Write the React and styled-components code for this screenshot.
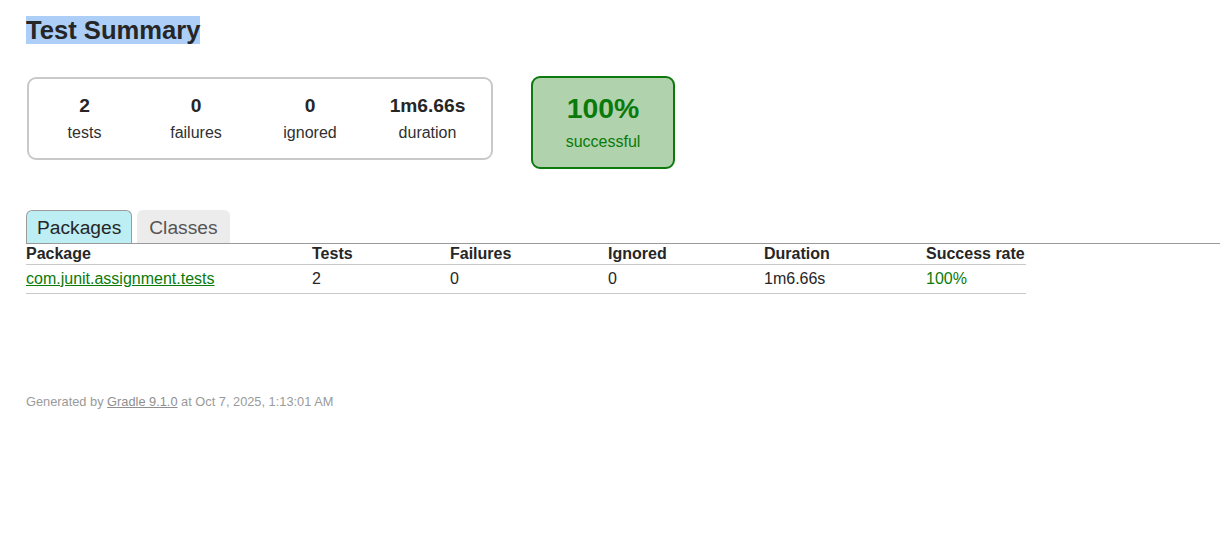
import React from 'react';
import styled, { createGlobalStyle } from 'styled-components';

const GlobalStyle = createGlobalStyle`
    body {
        margin: 0;
        padding: 0;
        background: #ffffff;
        font-family: "Liberation Sans", Arial, Helvetica, sans-serif;
        font-size: 16px;
        color: #262626;
    }
`;

const Content = styled.div`
    padding: 16px 0 0 26px;
`;

const Title = styled.h1`
    margin: 0;
    font-size: 25.6px;
    font-weight: bold;
    line-height: normal;
    color: #262626;
    white-space: nowrap;
    > span {
        background-color: #accef7;
    }
`;

const SummaryRow = styled.div`
    display: flex;
    align-items: flex-start;
    gap: 38px;
    margin-top: 31px;
`;

const SummaryBox = styled.div`
    display: flex;
    box-sizing: border-box;
    width: 466px;
    height: 83px;
    margin: 1px 0 0 1px;
    padding: 16px 0 0 0;
    border: 2px solid #c9c9c9;
    border-radius: 9px;
`;

const Counter = styled.div`
    width: ${(props) => props.w}px;
    text-align: center;
`;

const CounterValue = styled.div`
    font-size: 19.2px;
    font-weight: bold;
    line-height: 22px;
    color: #262626;
`;

const CounterLabel = styled.div`
    margin-top: 7px;
    font-size: 16px;
    line-height: 18px;
    color: #303030;
`;

const SuccessBox = styled.div`
    box-sizing: border-box;
    width: 144px;
    height: 93px;
    padding-top: 14px;
    border: 2px solid #0d7a0d;
    border-radius: 9px;
    background-color: #b0d3ae;
    color: #0a7a0a;
    text-align: center;
`;

const SuccessValue = styled.div`
    font-size: 28.4px;
    font-weight: bold;
    line-height: 32px;
`;

const SuccessLabel = styled.div`
    margin-top: 9px;
    font-size: 16px;
    line-height: 18px;
`;

const TabBar = styled.div`
    display: flex;
    gap: 5px;
    margin-top: 41px;
    border-bottom: 1px solid #9a9a9a;
`;

const Tab = styled.div`
    padding: 6px ${(props) => (props.selected ? 10 : 11)}px 4px;
    border: 1px solid ${(props) => (props.selected ? '#9c9c9c' : '#ececec')};
    border-bottom: none;
    border-radius: 6px 6px 0 0;
    background-color: ${(props) => (props.selected ? '#bdeef3' : '#ececec')};
    color: ${(props) => (props.selected ? '#262626' : '#555555')};
    font-size: 19.2px;
    line-height: 22px;
`;

const Table = styled.div`
    width: 1000px;
`;

const Row = styled.div`
    display: grid;
    grid-template-columns: 286px 138px 158px 156px 162px 100px;
    border-bottom: 1px solid #c8c8c8;
    padding: ${(props) => (props.head ? '1px 0 1px' : '5px 0 5px')};
    line-height: 18px;
    font-weight: ${(props) => (props.head ? 'bold' : 'normal')};
    white-space: nowrap;
`;

const Cell = styled.div`
    color: ${(props) => (props.green ? '#0a7a0a' : '#262626')};
`;

const PackageLink = styled.a`
    color: #0a7a0a;
    text-decoration: underline;
`;

const Footer = styled.div`
    margin-top: 100px;
    font-size: 12.8px;
    line-height: 15px;
    color: #9a9a9a;
    white-space: nowrap;
    > a {
        color: #8f8f8f;
        text-decoration: underline;
    }
`;

const counters = [
    { value: '2', label: 'tests', w: 111 },
    { value: '0', label: 'failures', w: 112 },
    { value: '0', label: 'ignored', w: 116 },
    { value: '1m6.66s', label: 'duration', w: 119 },
];

const App = () => {
    return (
        <>
            <GlobalStyle />
            <Content>
                <Title><span>Test Summary</span></Title>
                <SummaryRow>
                    <SummaryBox>
                        {counters.map((c) => (
                            <Counter key={c.label} w={c.w}>
                                <CounterValue>{c.value}</CounterValue>
                                <CounterLabel>{c.label}</CounterLabel>
                            </Counter>
                        ))}
                    </SummaryBox>
                    <SuccessBox>
                        <SuccessValue>100%</SuccessValue>
                        <SuccessLabel>successful</SuccessLabel>
                    </SuccessBox>
                </SummaryRow>
                <TabBar>
                    <Tab selected>Packages</Tab>
                    <Tab>Classes</Tab>
                </TabBar>
                <Table>
                    <Row head>
                        <Cell>Package</Cell>
                        <Cell>Tests</Cell>
                        <Cell>Failures</Cell>
                        <Cell>Ignored</Cell>
                        <Cell>Duration</Cell>
                        <Cell>Success rate</Cell>
                    </Row>
                    <Row>
                        <Cell><PackageLink href="#">com.junit.assignment.tests</PackageLink></Cell>
                        <Cell>2</Cell>
                        <Cell>0</Cell>
                        <Cell>0</Cell>
                        <Cell>1m6.66s</Cell>
                        <Cell green>100%</Cell>
                    </Row>
                </Table>
                <Footer>
                    Generated by <a href="#">Gradle 9.1.0</a> at Oct 7, 2025, 1:13:01 AM
                </Footer>
            </Content>
        </>
    );
};

export default App;
